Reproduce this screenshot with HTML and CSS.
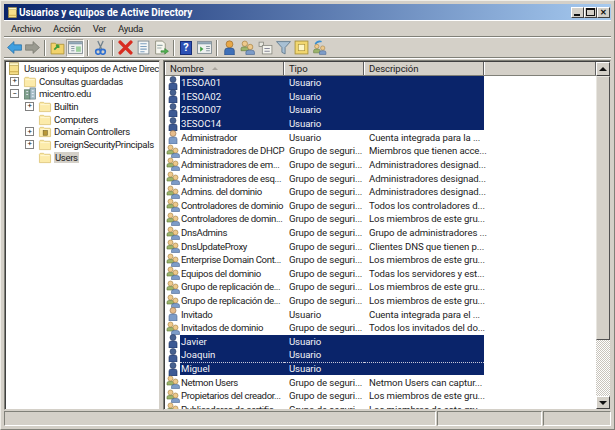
FILE: index.html
```html
<!DOCTYPE html>
<html lang="es">
<head>
    <meta charset="UTF-8">
    <title>Usuarios y equipos de Active Directory</title>
    <link rel="stylesheet" href="styles.css">
</head>
<body>

<svg class="defs" width="0" height="0">
    <symbol id="i-folder" viewBox="0 0 14 14">
        <path d="M1 3.5 L1.8 2.5 H5.5 L6.5 3.5 H12.5 L13 4.2 V12.5 H1 Z" fill="#fcebaa" stroke="#d8be6c" stroke-width=".8"/>
        <path d="M2 5 H12" stroke="#fff8d8" stroke-width="1"/>
    </symbol>
    <symbol id="i-folder-ou" viewBox="0 0 14 14">
        <path d="M1 3.5 L1.8 2.5 H5.5 L6.5 3.5 H12.5 L13 4.2 V12.5 H1 Z" fill="#fcebaa" stroke="#d8be6c" stroke-width=".8"/>
        <path d="M2 5 H12" stroke="#fff8d8" stroke-width="1"/>
        <rect x="5" y="6" width="4.5" height="5" fill="#b89838" stroke="#6c5a20" stroke-width=".6"/>
    </symbol>
    <symbol id="i-book" viewBox="0 0 14 14">
        <rect x="2" y="1" width="10" height="12.5" fill="#f6e08a" stroke="#a08a3c" stroke-width=".8"/>
        <rect x="2" y="1" width="10" height="2.5" fill="#fdf6c8" stroke="#a08a3c" stroke-width=".5"/>
        <rect x="2" y="10" width="10" height="1" fill="#c9a94a"/>
    </symbol>
    <symbol id="i-domain" viewBox="0 0 14 14">
        <rect x="1" y="3" width="6" height="10" fill="#7fa08c" stroke="#51705e" stroke-width=".7"/>
        <rect x="7" y="1" width="6" height="12" fill="#a8c0c8" stroke="#607880" stroke-width=".7"/>
        <path d="M3 5 H5 M3 8 H5 M9 4 H11 M9 7 H11 M9 10 H11" stroke="#eef" stroke-width="1"/>
    </symbol>
    <symbol id="i-user" viewBox="0 0 14 14">
        <circle cx="7" cy="3.5" r="3" fill="#e6bc8c" stroke="#8a6a48" stroke-width=".6"/>
        <path d="M3 14 V9 Q3 7 5.5 7 H8.5 Q11 7 11 9 V14 Z" fill="#7d9cc8" stroke="#4a6490" stroke-width=".6"/>
    </symbol>
    <symbol id="i-usersel" viewBox="0 0 14 14">
        <circle cx="7" cy="3.5" r="3" fill="#47618f" stroke="#2a3d68" stroke-width=".6"/>
        <path d="M3 14 V9 Q3 7 5.5 7 H8.5 Q11 7 11 9 V14 Z" fill="#3d5a94" stroke="#1d2f60" stroke-width=".6"/>
    </symbol>
    <symbol id="i-group" viewBox="0 0 14 14">
        <circle cx="4.5" cy="3.5" r="2.5" fill="#eec98c" stroke="#a07c3c" stroke-width=".6"/>
        <path d="M1 10 V8 Q1 6.5 3 6.5 H6 Q8 6.5 8 8 V10 Z" fill="#9cb46c" stroke="#607838" stroke-width=".6"/>
        <circle cx="9.5" cy="6.5" r="2.5" fill="#eec98c" stroke="#a07c3c" stroke-width=".6"/>
        <path d="M5.5 13.5 V11.5 Q5.5 9.5 8 9.5 H11 Q13.5 9.5 13.5 11.5 V13.5 Z" fill="#7d9cc8" stroke="#4a6490" stroke-width=".6"/>
    </symbol>
    <symbol id="i-back" viewBox="0 0 14 14">
        <path d="M0.5 7 L6.5 1.5 V4.5 H13.5 V9.5 H6.5 V12.5 Z" fill="#3f9fe0" stroke="#2470a8" stroke-width=".7"/>
    </symbol>
    <symbol id="i-forward" viewBox="0 0 14 14">
        <path d="M13.5 7 L7.5 1.5 V4.5 H.5 V9.5 H7.5 V12.5 Z" fill="#9a9a90" stroke="#77776e" stroke-width=".7"/>
    </symbol>
    <symbol id="i-up" viewBox="0 0 14 14">
        <path d="M1 3 H5 L6 4 H13 V13 H1 Z" fill="#f2d36c" stroke="#b09238" stroke-width=".8"/>
        <path d="M4 9 L8 5 M8 5 H5.5 M8 5 V7.5" stroke="#3d9c3d" stroke-width="1.6" fill="none"/>
    </symbol>
    <symbol id="i-tree" viewBox="0 0 14 14">
        <rect x=".5" y="1.5" width="13" height="11" fill="#eef0f0" stroke="#7c8890" stroke-width=".8"/>
        <rect x="1" y="2" width="12" height="2" fill="#8aa0b0"/>
        <rect x="7.5" y="6" width="4.5" height="5" fill="#9cd09c"/>
        <path d="M3 6 H6 M3 8 H6 M3 10 H6" stroke="#8a9aa4" stroke-width="1"/>
    </symbol>
    <symbol id="i-cut" viewBox="0 0 14 14">
        <path d="M4.5 1 L8 8.5 M9.5 1 L6 8.5" stroke="#70808c" stroke-width="1.2" fill="none"/>
        <circle cx="4.8" cy="11" r="2.3" fill="none" stroke="#2f6fd0" stroke-width="1.5"/>
        <circle cx="9.2" cy="11" r="2.3" fill="none" stroke="#2f6fd0" stroke-width="1.5"/>
    </symbol>
    <symbol id="i-delete" viewBox="0 0 14 14">
        <path d="M2 2 L12 12 M12 2 L2 12" stroke="#d82c20" stroke-width="3.2" stroke-linecap="round"/>
    </symbol>
    <symbol id="i-props" viewBox="0 0 14 14">
        <rect x="2" y="1" width="10" height="12" fill="#f4f6f6" stroke="#7c8890" stroke-width=".8"/>
        <path d="M4 3.5 H10 M4 6 H10 M4 8.5 H10 M4 11 H8" stroke="#7ea0c0" stroke-width="1"/>
    </symbol>
    <symbol id="i-export" viewBox="0 0 14 14">
        <path d="M1.5 1 H8 L10.5 3.5 V13 H1.5 Z" fill="#f6f6ee" stroke="#8a8a78" stroke-width=".8"/>
        <path d="M3 5 H8 M3 7.5 H7" stroke="#9aa" stroke-width="1"/>
        <path d="M6.5 10 H10 V8 L13.5 10.5 L10 13 V11.5 H6.5 Z" fill="#50b050" stroke="#2e7c2e" stroke-width=".5"/>
    </symbol>
    <symbol id="i-view" viewBox="0 0 14 14">
        <rect x=".5" y="1.5" width="13" height="11" fill="#eef0f0" stroke="#7c8890" stroke-width=".8"/>
        <rect x="1" y="2" width="12" height="2" fill="#8aa0b0"/>
        <path d="M3 6 L6 8.5 L3 11 Z" fill="#40a040"/>
        <path d="M8.5 6 H12 M8.5 8 H12 M8.5 10 H12" stroke="#8a9aa4" stroke-width="1"/>
    </symbol>
    <symbol id="i-newuser" viewBox="0 0 14 14">
        <circle cx="7" cy="4" r="3.2" fill="#e8a848" stroke="#94682c" stroke-width=".6"/>
        <path d="M2.5 14 V10 Q2.5 7.5 5.5 7.5 H8.5 Q11.5 7.5 11.5 10 V14 Z" fill="#3f70b8" stroke="#264a80" stroke-width=".6"/>
    </symbol>
    <symbol id="i-ou" viewBox="0 0 14 14">
        <rect x="1" y="2" width="4" height="4" fill="#e8e8e0" stroke="#808078" stroke-width=".7"/>
        <rect x="4" y="5" width="9" height="8" fill="#f4f4ee" stroke="#808078" stroke-width=".7"/>
        <path d="M6 8 H11 M6 10.5 H11" stroke="#889" stroke-width="1"/>
    </symbol>
    <symbol id="i-filter" viewBox="0 0 14 14">
        <path d="M.5 1.5 H13.5 L8.5 7 V13 L5.5 11.5 V7 Z" fill="#a8c0d4" stroke="#60788c" stroke-width=".8"/>
    </symbol>
    <symbol id="i-doc" viewBox="0 0 14 14">
        <rect x="1" y="1" width="12" height="12" fill="#f2d770" stroke="#a89038" stroke-width=".8"/>
        <rect x="4" y="4" width="6" height="6" fill="#fdf6c8" stroke="#a89038" stroke-width=".6"/>
    </symbol>
    <symbol id="i-delegate" viewBox="0 0 14 14">
        <path d="M3 4 Q5 .5 9 1.5" stroke="#3a90d0" stroke-width="1.4" fill="none"/>
        <circle cx="4.5" cy="6" r="2" fill="#eec98c" stroke="#a07c3c" stroke-width=".5"/>
        <path d="M1.5 12 V10 Q1.5 8.5 3.5 8.5 H5.5 Q7.5 8.5 7.5 10 V12 Z" fill="#9cb46c" stroke="#607838" stroke-width=".5"/>
        <circle cx="10" cy="7.5" r="2" fill="#eec98c" stroke="#a07c3c" stroke-width=".5"/>
        <path d="M7 13.5 V11.5 Q7 10 9 10 H11 Q13 10 13 11.5 V13.5 Z" fill="#7d9cc8" stroke="#4a6490" stroke-width=".5"/>
    </symbol>
</svg>

<div class="window">
    <div class="titlebar">
        <svg class="title-icon"><use href="#i-book"/></svg>
        <span class="title-text">Usuarios y equipos de Active Directory</span>
        <div class="title-buttons">
            <span class="win-btn"><i class="glyph-min"></i></span>
            <span class="win-btn"><i class="glyph-max"></i></span>
            <span class="win-btn glyph-close">&#10005;</span>
        </div>
    </div>

    <div class="menubar">
        <span>Archivo</span>
        <span>Acción</span>
        <span>Ver</span>
        <span>Ayuda</span>
    </div>

    <div class="toolbar">
        <span class="tool"><svg><use href="#i-back"/></svg></span>
        <span class="tool"><svg><use href="#i-forward"/></svg></span>
        <span class="tool-sep"></span>
        <span class="tool"><svg><use href="#i-up"/></svg></span>
        <span class="tool pressed"><svg><use href="#i-tree"/></svg></span>
        <span class="tool-sep"></span>
        <span class="tool"><svg><use href="#i-cut"/></svg></span>
        <span class="tool-sep"></span>
        <span class="tool"><svg><use href="#i-delete"/></svg></span>
        <span class="tool"><svg><use href="#i-props"/></svg></span>
        <span class="tool"><svg><use href="#i-export"/></svg></span>
        <span class="tool-sep"></span>
        <span class="tool"><span class="help-icon">?</span></span>
        <span class="tool"><svg><use href="#i-view"/></svg></span>
        <span class="tool-sep"></span>
        <span class="tool"><svg><use href="#i-newuser"/></svg></span>
        <span class="tool"><svg><use href="#i-group"/></svg></span>
        <span class="tool"><svg><use href="#i-ou"/></svg></span>
        <span class="tool"><svg><use href="#i-filter"/></svg></span>
        <span class="tool"><svg><use href="#i-doc"/></svg></span>
        <span class="tool"><svg><use href="#i-delegate"/></svg></span>
    </div>

    <div class="panes">
        <div class="tree">
            <div class="node root"><svg><use href="#i-book"/></svg><span>Usuarios y equipos de Active Direct</span></div>
            <div class="node lv1"><b class="exp">+</b><svg><use href="#i-folder"/></svg><span>Consultas guardadas</span></div>
            <div class="node lv1"><b class="exp">&minus;</b><svg><use href="#i-domain"/></svg><span>micentro.edu</span></div>
            <div class="node lv2"><b class="exp">+</b><svg><use href="#i-folder"/></svg><span>Builtin</span></div>
            <div class="node lv2"><b class="exp none"></b><svg><use href="#i-folder"/></svg><span>Computers</span></div>
            <div class="node lv2"><b class="exp">+</b><svg><use href="#i-folder-ou"/></svg><span>Domain Controllers</span></div>
            <div class="node lv2"><b class="exp">+</b><svg><use href="#i-folder"/></svg><span>ForeignSecurityPrincipals</span></div>
            <div class="node lv2"><b class="exp none"></b><svg><use href="#i-folder"/></svg><span class="current">Users</span></div>
        </div>

        <div class="list">
            <div class="list-main">
                <div class="head">
                    <span class="col-name">Nombre <i class="sort"></i></span>
                    <span class="col-type">Tipo</span>
                    <span class="col-desc">Descripción</span>
                    <span class="col-fill"></span>
                </div>
                <div class="rows">
                    <div class="row sel"><svg><use href="#i-usersel"/></svg><span class="col-name">1ESOA01</span><span class="col-type">Usuario</span><span class="col-desc"></span></div>
                    <div class="row sel"><svg><use href="#i-usersel"/></svg><span class="col-name">1ESOA02</span><span class="col-type">Usuario</span><span class="col-desc"></span></div>
                    <div class="row sel"><svg><use href="#i-usersel"/></svg><span class="col-name">2ESOD07</span><span class="col-type">Usuario</span><span class="col-desc"></span></div>
                    <div class="row sel"><svg><use href="#i-usersel"/></svg><span class="col-name">3ESOC14</span><span class="col-type">Usuario</span><span class="col-desc"></span></div>
                    <div class="row"><svg><use href="#i-user"/></svg><span class="col-name">Administrador</span><span class="col-type">Usuario</span><span class="col-desc">Cuenta integrada para la ...</span></div>
                    <div class="row"><svg><use href="#i-group"/></svg><span class="col-name">Administradores de DHCP</span><span class="col-type">Grupo de seguri...</span><span class="col-desc">Miembros que tienen acce...</span></div>
                    <div class="row"><svg><use href="#i-group"/></svg><span class="col-name">Administradores de em...</span><span class="col-type">Grupo de seguri...</span><span class="col-desc">Administradores designad...</span></div>
                    <div class="row"><svg><use href="#i-group"/></svg><span class="col-name">Administradores de esq...</span><span class="col-type">Grupo de seguri...</span><span class="col-desc">Administradores designad...</span></div>
                    <div class="row"><svg><use href="#i-group"/></svg><span class="col-name">Admins. del dominio</span><span class="col-type">Grupo de seguri...</span><span class="col-desc">Administradores designad...</span></div>
                    <div class="row"><svg><use href="#i-group"/></svg><span class="col-name">Controladores de dominio</span><span class="col-type">Grupo de seguri...</span><span class="col-desc">Todos los controladores d...</span></div>
                    <div class="row"><svg><use href="#i-group"/></svg><span class="col-name">Controladores de domin...</span><span class="col-type">Grupo de seguri...</span><span class="col-desc">Los miembros de este gru...</span></div>
                    <div class="row"><svg><use href="#i-group"/></svg><span class="col-name">DnsAdmins</span><span class="col-type">Grupo de seguri...</span><span class="col-desc">Grupo de administradores ...</span></div>
                    <div class="row"><svg><use href="#i-group"/></svg><span class="col-name">DnsUpdateProxy</span><span class="col-type">Grupo de seguri...</span><span class="col-desc">Clientes DNS que tienen p...</span></div>
                    <div class="row"><svg><use href="#i-group"/></svg><span class="col-name">Enterprise Domain Cont...</span><span class="col-type">Grupo de seguri...</span><span class="col-desc">Los miembros de este gru...</span></div>
                    <div class="row"><svg><use href="#i-group"/></svg><span class="col-name">Equipos del dominio</span><span class="col-type">Grupo de seguri...</span><span class="col-desc">Todas los servidores y est...</span></div>
                    <div class="row"><svg><use href="#i-group"/></svg><span class="col-name">Grupo de replicación de...</span><span class="col-type">Grupo de seguri...</span><span class="col-desc">Los miembros de este gru...</span></div>
                    <div class="row"><svg><use href="#i-group"/></svg><span class="col-name">Grupo de replicación de...</span><span class="col-type">Grupo de seguri...</span><span class="col-desc">Los miembros de este gru...</span></div>
                    <div class="row"><svg><use href="#i-user"/></svg><span class="col-name">Invitado</span><span class="col-type">Usuario</span><span class="col-desc">Cuenta integrada para el ...</span></div>
                    <div class="row"><svg><use href="#i-group"/></svg><span class="col-name">Invitados de dominio</span><span class="col-type">Grupo de seguri...</span><span class="col-desc">Todos los invitados del do...</span></div>
                    <div class="row sel"><svg><use href="#i-usersel"/></svg><span class="col-name">Javier</span><span class="col-type">Usuario</span><span class="col-desc"></span></div>
                    <div class="row sel"><svg><use href="#i-usersel"/></svg><span class="col-name">Joaquin</span><span class="col-type">Usuario</span><span class="col-desc"></span></div>
                    <div class="row sel focus"><svg><use href="#i-usersel"/></svg><span class="col-name">Miguel</span><span class="col-type">Usuario</span><span class="col-desc"></span></div>
                    <div class="row"><svg><use href="#i-group"/></svg><span class="col-name">Netmon Users</span><span class="col-type">Grupo de seguri...</span><span class="col-desc">Netmon Users can captur...</span></div>
                    <div class="row"><svg><use href="#i-group"/></svg><span class="col-name">Propietarios del creador...</span><span class="col-type">Grupo de seguri...</span><span class="col-desc">Los miembros de este gru...</span></div>
                    <div class="row"><svg><use href="#i-group"/></svg><span class="col-name">Publicadores de certific...</span><span class="col-type">Grupo de seguri...</span><span class="col-desc">Los miembros de este gru...</span></div>
                </div>
            </div>
            <div class="scrollbar">
                <span class="scroll-btn first"><i class="arrow-up"></i></span>
                <span class="scroll-thumb"></span>
                <span class="scroll-track"></span>
                <span class="scroll-btn"><i class="arrow-down"></i></span>
            </div>
        </div>
    </div>

    <div class="statusbar">
        <span class="status-main"></span>
        <span class="status-mid"></span>
        <span class="status-end"></span>
    </div>
</div>

</body>
</html>
```

FILE: styles.css
```css
* {
    box-sizing: border-box;
}
body {
    margin: 0;
    overflow: hidden;
    font-family: Roboto, "Liberation Sans", sans-serif;
    font-size: 9.6px;
    letter-spacing: -0.1px;
    color: #222;
}
.defs {
    position: absolute;
}
.window {
    width: 615px;
    height: 430px;
    display: flex;
    flex-direction: column;
    padding: 4px 3px 3px 3px;
    background: #d4d0c8;
    border: 1px solid #808078;
    border-top-color: #f0eee8;
    border-left-color: #f0eee8;
}

/* barra de titulo */
.titlebar {
    height: 16px;
    flex: none;
    display: flex;
    align-items: center;
    padding: 0 1px 0 3px;
    background: linear-gradient(to right, #0a246a, #a6caf0);
    margin-top: -1px;
}
.title-icon {
    width: 11px;
    height: 13px;
    margin-right: 1px;
}
.title-text {
    flex: 1;
    color: #fff;
    font-weight: bold;
    font-size: 10px;
    letter-spacing: 0;
}
.title-buttons {
    display: flex;
    gap: 0;
}
.win-btn {
    width: 13px;
    height: 11px;
    display: flex;
    align-items: center;
    justify-content: center;
    background: #d4d0c8;
    border: 1px solid;
    border-color: #fff #404040 #404040 #fff;
    color: #111;
    font-size: 8px;
    font-weight: bold;
}
.glyph-min {
    width: 6px;
    height: 2px;
    background: #111;
    margin-top: 5px;
    margin-right: 2px;
}
.glyph-max {
    width: 9px;
    height: 8px;
    border: 1px solid #111;
    border-top-width: 2px;
}

/* menu */
.menubar {
    height: 17px;
    flex: none;
    display: flex;
    align-items: center;
    padding-left: 7px;
    gap: 12px;
    letter-spacing: -0.3px;
    border-bottom: 1px solid #808078;
    box-shadow: 0 1px 0 #fff, inset 0 1px 0 #fff;
}

/* barra de herramientas */
.toolbar {
    height: 20px;
    flex: none;
    display: flex;
    align-items: center;
    padding-left: 1px;
    margin-top: 1px;
    border-bottom: 1px solid #808078;
    box-shadow: 0 1px 0 #fff;
}
.tool {
    width: 18px;
    height: 18px;
    display: flex;
    align-items: center;
    justify-content: center;
}
.tool svg {
    width: 15px;
    height: 15px;
}
.tool.pressed {
    background: #eae8e2;
    border: 1px solid;
    border-color: #a8a49c #fff #fff #a8a49c;
}
.help-icon {
    width: 12px;
    height: 14px;
    display: flex;
    align-items: center;
    justify-content: center;
    background: #2c50b4;
    border: 1px solid #162c78;
    color: #fff;
    font-size: 11px;
    font-weight: bold;
}
.tool-sep {
    width: 1px;
    height: 16px;
    margin: 0 3px;
    background: #808078;
    box-shadow: 1px 0 0 #fff;
}

/* paneles */
.panes {
    flex: 1;
    min-height: 0;
    display: flex;
    gap: 3px;
    margin-top: 2px;
}
.tree {
    width: 156px;
    flex: none;
    padding: 1px 0 0 2px;
    background: #fff;
    border: 1px solid;
    border-color: #808078 #d4d0c8 #d4d0c8 #808078;
    box-shadow: inset 1px 1px 0 #404040;
    letter-spacing: -0.35px;
    overflow: hidden;
}
.node {
    height: 12.7px;
    display: flex;
    align-items: center;
    white-space: nowrap;
}
.node svg {
    width: 14px;
    height: 13px;
    flex: none;
    margin-right: 2px;
}
.node.root svg {
    margin-right: 3px;
}
.node.lv1 {
    padding-left: 3px;
}
.node.lv2 {
    padding-left: 18px;
}
.exp {
    width: 9px;
    height: 9px;
    flex: none;
    margin-right: 4px;
    display: flex;
    align-items: center;
    justify-content: center;
    border: 1px solid #808080;
    font-size: 8px;
    font-weight: normal;
    line-height: 1;
}
.exp.none {
    border: none;
}
.current {
    background: #d4d0c8;
    padding: 0 1px;
}

.list {
    flex: 1;
    min-width: 0;
    display: flex;
    background: #fff;
    border: 1px solid;
    border-color: #808078 #d4d0c8 #d4d0c8 #808078;
    box-shadow: inset 1px 1px 0 #404040;
    padding: 1px 0 0 1px;
}
.list-main {
    flex: 1;
    min-width: 0;
    display: flex;
    flex-direction: column;
    overflow: hidden;
}
.head {
    height: 14px;
    flex: none;
    display: flex;
    background: #d4d0c8;
    border-bottom: 1px solid #808078;
}
.head span {
    display: block;
    height: 13px;
    line-height: 13px;
    border-left: 1px solid #fff;
    border-right: 1px solid #606060;
    padding-left: 4px;
}
.head .col-name {
    width: 119px;
}
.head .col-type {
    width: 80px;
}
.head .col-desc {
    width: 120px;
}
.col-fill {
    flex: 1;
}
.sort {
    display: inline-block;
    margin: 0 0 2px 6px;
    border: 3px solid transparent;
    border-top: 0;
    border-bottom: 3px solid #a8a49c;
}
.rows {
    flex: 1;
    min-height: 0;
    overflow: hidden;
}
.row {
    height: 13.62px;
    display: flex;
    align-items: center;
    white-space: nowrap;
    color: #222;
}
.row svg {
    width: 14px;
    height: 14px;
    flex: none;
    margin-left: 1px;
}
.row .col-name {
    width: 104px;
    flex: none;
    padding-left: 1px;
    letter-spacing: -0.35px;
}
.row.sel .col-name {
    letter-spacing: 0;
}
.row .col-type {
    width: 80px;
    flex: none;
    padding-left: 5px;
}
.row .col-desc {
    width: 120px;
    flex: none;
    padding-left: 5px;
}
.row.sel span {
    height: 100%;
    line-height: 13.6px;
    background: #0a246a;
    color: #f4f4f8;
}
.row.focus span {
    border-top: 1px dotted #c8c8d8;
    border-bottom: 1px dotted #0a246a;
    line-height: 12px;
}

.scrollbar {
    width: 14px;
    flex: none;
    display: flex;
    flex-direction: column;
    background: #d4d0c8;
}
.scroll-btn {
    height: 13px;
    flex: none;
    display: flex;
    align-items: center;
    justify-content: center;
    background: #d4d0c8;
    border: 1px solid;
    border-color: #fff #404040 #404040 #fff;
}
.scroll-btn.first {
    height: 14px;
}
.arrow-up {
    border: 4px solid transparent;
    border-top: 0;
    border-bottom: 4px solid #111;
}
.arrow-down {
    border: 4px solid transparent;
    border-bottom: 0;
    border-top: 4px solid #111;
}
.scroll-thumb {
    height: 264px;
    flex: none;
    background: #d4d0c8;
    border: 1px solid;
    border-color: #e8e6e0 #505050 #505050 #e8e6e0;
}
.scroll-track {
    flex: 1;
    background: repeating-conic-gradient(#fff 0 25%, #c8c4bc 0 50%) 0 0 / 2px 2px;
}

/* barra de estado */
.statusbar {
    height: 15px;
    flex: none;
    display: flex;
    margin-top: 1px;
    gap: 1px;
}
.statusbar span {
    border: 1px solid;
    border-color: #808078 #fff #fff #808078;
}
.status-main {
    width: 432px;
}
.status-mid {
    width: 105px;
}
.status-end {
    flex: 1;
}
```
